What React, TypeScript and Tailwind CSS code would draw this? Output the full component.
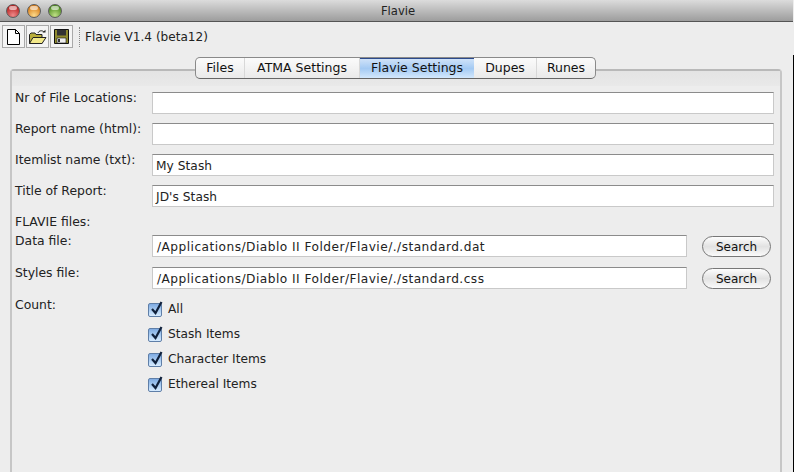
import type { ReactNode } from "react";

const font = "font-['DejaVu_Sans',sans-serif]";

function Light({ color }: { color: string }) {
  return (
    <div className="relative h-[14px] w-[14px] rounded-full border border-[#5c5c5c]" style={{ background: color }}>
      <div className="absolute left-[2px] top-[1px] h-[4px] w-[8px] rounded-full bg-white/60" />
    </div>
  );
}

function ToolButton({ children }: { children: ReactNode }) {
  return (
    <div className="flex h-[23px] w-[23px] items-center justify-center border border-[#a9a9a9] bg-[#f4f4f4]">
      {children}
    </div>
  );
}

function NewIcon() {
  return (
    <svg width="15" height="18" viewBox="0 0 15 18">
      <path d="M1.5 1.5H9.5L13.5 5.5V16.5H1.5Z" fill="#fff" stroke="#000" />
      <path d="M9.5 1.5V5.5H13.5" fill="none" stroke="#000" />
    </svg>
  );
}

function OpenIcon() {
  return (
    <svg width="18" height="16" viewBox="0 0 18 16">
      <path d="M0.5 14.5V5.5L2 4H6L7 5.5H13V14.5Z" fill="#b9ae3a" stroke="#222" />
      <path d="M0.5 14.5L4 8.5H17L13 14.5Z" fill="#f3e98a" stroke="#222" />
      <path d="M9 4C10 1.5 13 1 15 3" fill="none" stroke="#222" />
      <path d="M13.5 3.5H16.5V0.8Z" fill="#222" />
    </svg>
  );
}

function SaveIcon() {
  return (
    <svg width="15" height="15" viewBox="0 0 15 15">
      <path d="M0.5 0.5H14.5V14.5H0.5Z" fill="#8f8a2e" stroke="#111" />
      <path d="M3 1H12V6.5H3Z" fill="#333" />
      <path d="M3 9H12V14H3Z" fill="#eee" stroke="#111" strokeWidth="0.6" />
      <path d="M4 10H6V13H4Z" fill="#333" />
    </svg>
  );
}

function Tab({ label, width, active }: { label: string; width: string; active?: boolean }) {
  return (
    <div
      className={
        active
          ? `${width} flex items-center justify-center border-t border-t-[#2c4a8c] bg-gradient-to-b from-[#cfe2f8] via-[#a4caf3] to-[#d3e8fd] text-[#111]`
          : `${width} flex items-center justify-center border-r border-r-[#d8d8d8] text-[#111]`
      }
    >
      {label}
    </div>
  );
}

function Field({ value, file }: { value?: string; file?: boolean }) {
  return (
    <div
      className={
        file
          ? "flex h-[22px] w-full items-center whitespace-nowrap border border-[#c9c9c9] border-t-[#8b8b8b] bg-white pl-[4px] pt-[2px] text-[12.2px] tracking-[0.46px] text-[#222]"
          : "flex h-[22px] w-full items-center whitespace-nowrap border border-[#c9c9c9] border-t-[#8b8b8b] bg-white pl-[3px] pt-[2px] text-[12.2px] tracking-[0.05px] text-[#222]"
      }
    >
      {value}
    </div>
  );
}

function Row({ label, value }: { label: string; value?: string }) {
  return (
    <div className="flex h-[22px]">
      <div className="w-[137px] shrink-0 -translate-y-[2px] text-[12.4px] leading-[15px] text-[#222]">{label}</div>
      <Field value={value} />
    </div>
  );
}

function FileRow({ label, value }: { label: string; value: string }) {
  return (
    <div className="flex h-[22px]">
      <div className="w-[137px] shrink-0 -translate-y-[2px] text-[12.4px] leading-[15px] text-[#222]">{label}</div>
      <div className="w-[535px] shrink-0">
        <Field value={value} file />
      </div>
      <div className="ml-[15px] mt-[1px] flex h-[21px] w-[69px] items-center justify-center rounded-full border border-[#777] bg-gradient-to-b from-[#fdfdfd] via-[#e2e2e2] to-[#fafafa] text-[12px] text-[#111]">
        Search
      </div>
    </div>
  );
}

function Check({ label }: { label: string }) {
  return (
    <div className="flex h-[25px] items-center">
      <div className="relative h-[14px] w-[14px] rounded-[2px] border border-[#5f7fa8] bg-gradient-to-b from-[#7fabe2] via-[#a9ccf2] to-[#d8ecff]">
        <svg className="absolute -top-[4px] left-0" width="16" height="17" viewBox="0 0 16 17">
          <path d="M3 9L6.5 13L12.5 2" fill="none" stroke="#10213c" strokeWidth="2.2" />
        </svg>
      </div>
      <div className="ml-[6px] text-[12.2px] text-[#222]">{label}</div>
    </div>
  );
}

export default function App() {
  return (
    <div className={`flex h-[472px] w-[794px] overflow-hidden bg-[#ededed] ${font}`}>
      <div className="flex w-[793px] shrink-0 flex-col">
        <div className="flex h-[22px] shrink-0 items-center border-b border-b-[#555] bg-gradient-to-b from-[#dcdcdc] to-[#9d9d9d]">
          <div className="flex w-0 gap-[7px] pl-[6px]">
            <div className="flex shrink-0 gap-[7px]">
              <Light color="radial-gradient(circle at 50% 85%, #ee8a8a, #b92222 75%)" />
              <Light color="radial-gradient(circle at 50% 85%, #fbd98a, #d97d18 75%)" />
              <Light color="radial-gradient(circle at 50% 85%, #bfe085, #4f8c20 75%)" />
            </div>
          </div>
          <div className="flex-1 pr-[3px] pt-[3px] text-center text-[11.6px] leading-none text-[#222]">Flavie</div>
        </div>

        <div className="flex h-[27px] shrink-0 items-center gap-[1px] pl-[2px] pt-[2px]">
          <ToolButton><NewIcon /></ToolButton>
          <ToolButton><OpenIcon /></ToolButton>
          <ToolButton><SaveIcon /></ToolButton>
          <div className="ml-[5px] h-[20px] border-l border-dotted border-l-[#888]" />
          <div className="ml-[4px] pt-[1px] text-[12.1px] text-[#222]">Flavie V1.4 (beta12)</div>
        </div>

        <div className="ml-[10px] mt-[20px] flex w-[772px] flex-1 flex-col rounded-t-[4px] border-x-2 border-t-2 border-[#c6c6c6] border-t-[#b9b9b9]">
          <div className="h-[15px] shrink-0 bg-gradient-to-b from-[#e4e4e4] to-[#e9e9e9]">
            <div className="-mt-[14px] flex justify-center pr-[1px]">
              <div className="flex h-[22px] w-[401px] translate-y-[0px] overflow-hidden rounded-[5px] border border-[#8a8a8a] border-b-[#666] bg-gradient-to-b from-[#fbfbfb] to-[#eaeaea] text-[12.5px]">
                <Tab label="Files" width="w-[49px]" />
                <Tab label="ATMA Settings" width="w-[115px]" />
                <Tab label="Flavie Settings" width="w-[114px]" active />
                <Tab label="Dupes" width="w-[63px]" />
                <div className="flex w-[58px] items-center justify-center text-[#111]">Runes</div>
              </div>
            </div>
          </div>

          <div className="flex flex-col pl-[3px] pr-[6px] pt-[6px]">
            <div className="flex flex-col gap-[9px]">
              <Row label="Nr of File Locations:" />
              <Row label="Report name (html):" />
              <Row label="Itemlist name (txt):" value="My Stash" />
              <Row label="Title of Report:" value="JD's Stash" />
            </div>
            <div className="mt-[7px] h-[21px] text-[12.4px] leading-[15px] text-[#222]">FLAVIE files:</div>
            <div className="flex flex-col gap-[10px]">
              <FileRow label="Data file:" value="/Applications/Diablo II Folder/Flavie/./standard.dat" />
              <FileRow label="Styles file:" value="/Applications/Diablo II Folder/Flavie/./standard.css" />
            </div>
            <div className="mt-[8px] flex">
              <div className="w-[133px] shrink-0 text-[12.4px] leading-[15px] text-[#222]">Count:</div>
              <div className="flex flex-col">
                <Check label="All" />
                <Check label="Stash Items" />
                <Check label="Character Items" />
                <Check label="Ethereal Items" />
              </div>
            </div>
          </div>
        </div>
      </div>
      <div className="mt-[55px] w-[1px] shrink-0 bg-black" />
    </div>
  );
}
